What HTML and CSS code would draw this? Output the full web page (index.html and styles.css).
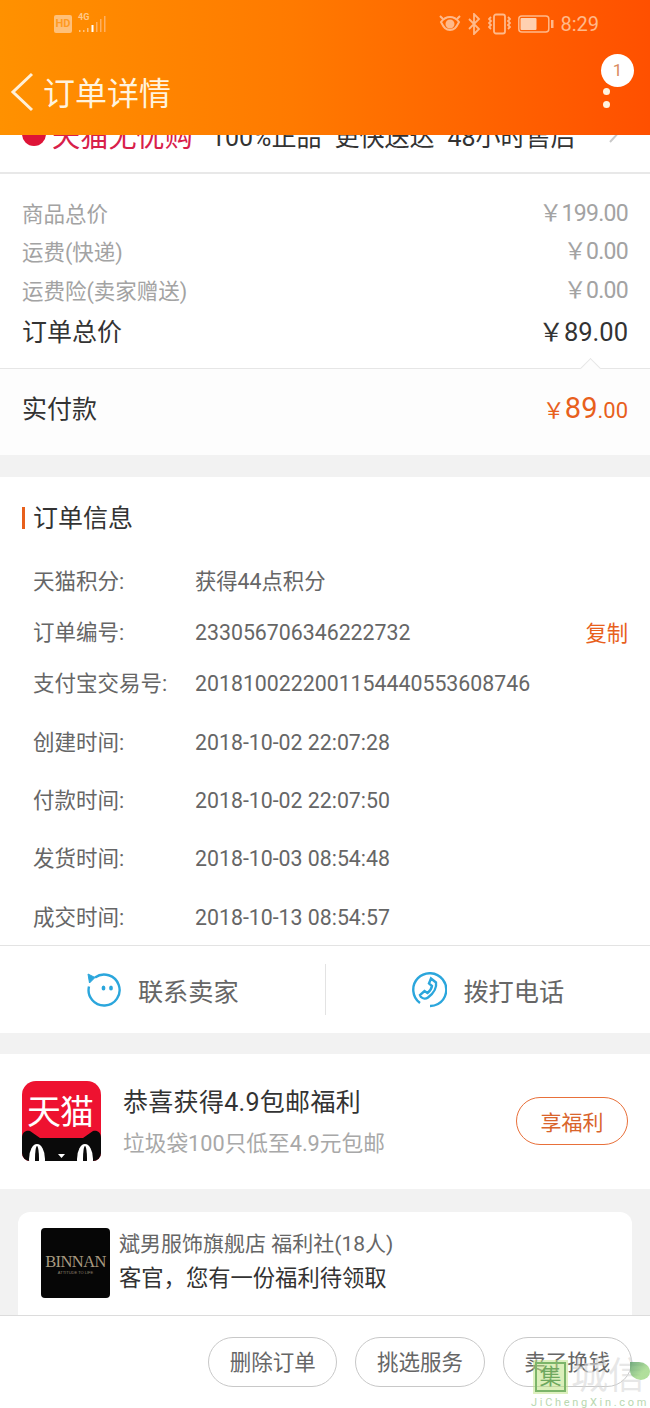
FILE: index.html
```html
<!DOCTYPE html>
<html lang="zh">
<head>
<meta charset="utf-8">
<title>订单详情</title>
<link rel="stylesheet" href="styles.css">
</head>
<body>
<div class="page">
  <header class="header">
    <div class="status">
      <div class="status-left">
        <span class="hd">HD</span>
        <div class="net">
          <span class="net-label">4G</span>
          <svg class="bars" width="32" height="20" viewBox="0 0 32 20"><g fill="#ffc27f"><rect x="3" y="15" width="1.500" height="2"/><rect x="7" y="15" width="1.500" height="2"/><rect x="11" y="13" width="1.500" height="4"/></g><rect x="15.500" y="10" width="2" height="7" fill="#fff"/><g fill="#ffb060"><rect x="20" y="7" width="1.500" height="10"/><rect x="24" y="4" width="1.500" height="13"/><rect x="28" y="1" width="1.500" height="16"/></g></svg>
        </div>
      </div>
      <div class="status-right">
        <svg width="22" height="20" viewBox="0 0 22 20" fill="none" stroke="#ffb98a" stroke-width="2"><path d="M2 8c3-4 5-5 9-5s6 1 9 5c-3 6-5 8-9 8s-6-2-9-8z"/><circle cx="11" cy="10" r="3.500" fill="#ffb98a"/><path d="M1 2l3 3M21 2l-3 3"/></svg>
        <svg width="13" height="22" viewBox="0 0 13 22" fill="none" stroke="#ffb98a" stroke-width="1.800"><path d="M1 6l10 10-5 5V1l5 5L1 16"/></svg>
        <svg width="23" height="22" viewBox="0 0 23 22" fill="none" stroke="#ffb98a" stroke-width="1.800"><rect x="6" y="1.500" width="11" height="19" rx="2"/><path d="M3 4l-2 2 2 2-2 2 2 2-2 2 2 2M20 4l2 2-2 2 2 2-2 2 2 2-2 2"/></svg>
        <svg width="36" height="18" viewBox="0 0 36 18"><rect x=".8" y="1" width="30" height="16" rx="3" fill="none" stroke="#ffb98a" stroke-width="1.500"/><rect x="2.500" y="3" width="16" height="12" rx="1" fill="#ffd0b0"/><rect x="33" y="5" width="2.500" height="8" fill="#ffb98a"/></svg>
        <span class="clock">8:29</span>
      </div>
    </div>
    <div class="nav">
      <svg class="back" width="24" height="40" viewBox="0 0 24 40" fill="none" stroke="#fff0d8" stroke-width="3"><path d="M22 2L3 20l19 18"/></svg>
      <h1 class="nav-title">订单详情</h1>
      <div class="more">
        <span class="badge">1</span>
        <span class="dot"></span>
        <span class="dot"></span>
      </div>
    </div>
  </header>

  <div class="assure">
    <div class="assure-inner">
      <span class="assure-mark"></span>
      <span class="assure-brand">天猫无忧购</span>
      <span class="assure-item assure-first">100%正品</span>
      <span class="assure-item">更快送达</span>
      <span class="assure-item">48小时售后</span>
      <svg class="assure-arrow" width="15" height="26" viewBox="0 0 15 26" fill="none" stroke="#c9c9c9" stroke-width="2"><path d="M2 1l11 12L2 25"/></svg>
    </div>
  </div>

  <section class="prices">
    <div class="price-row price-muted"><span>商品总价</span><span class="amount">￥199.00</span></div>
    <div class="price-row price-muted"><span>运费(快递)</span><span class="amount">￥0.00</span></div>
    <div class="price-row price-muted"><span>运费险(卖家赠送)</span><span class="amount">￥0.00</span></div>
    <div class="price-row price-total"><span>订单总价</span><span class="amount">￥89.00</span></div>
  </section>

  <section class="paid">
    <span class="caret"></span>
    <span class="paid-label">实付款</span>
    <span class="paid-amount"><span class="paid-small">￥</span><span class="paid-big">89</span><span class="paid-small">.00</span></span>
  </section>

  <section class="info">
    <h2 class="info-title">订单信息</h2>
    <dl class="info-list">
      <div class="info-row r1"><dt>天猫积分:</dt><dd class="cjk">获得44点积分</dd></div>
      <div class="info-row r1"><dt>订单编号:</dt><dd>233056706346222732</dd><a class="copy">复制</a></div>
      <div class="info-row r1 r-last"><dt>支付宝交易号:</dt><dd>2018100222001154440553608746</dd></div>
      <div class="info-row r2"><dt>创建时间:</dt><dd>2018-10-02 22:07:28</dd></div>
      <div class="info-row r2"><dt>付款时间:</dt><dd>2018-10-02 22:07:50</dd></div>
      <div class="info-row r2"><dt>发货时间:</dt><dd>2018-10-03 08:54:48</dd></div>
      <div class="info-row r2"><dt>成交时间:</dt><dd>2018-10-13 08:54:57</dd></div>
    </dl>
    <div class="contact">
      <div class="contact-item">
        <svg width="36" height="36" viewBox="0 0 36 36" fill="none" stroke="#2ba6dc" stroke-width="2.400"><path d="M9 5.500A15.500 15.500 0 1 1 3 14.500" /><path d="M2 2l1.500 9L9 5.500z" fill="#2ba6dc" stroke-width="1"/><ellipse cx="17.500" cy="16" rx="1.900" ry="2.600" fill="#2ba6dc" stroke="none"/><ellipse cx="25" cy="16" rx="1.900" ry="2.600" fill="#2ba6dc" stroke="none"/></svg>
        <span>联系卖家</span>
      </div>
      <div class="contact-item contact-right">
        <svg width="36" height="36" viewBox="0 0 36 36" fill="none" stroke="#2ba6dc" stroke-width="2.400"><path d="M9 31A16.500 16.500 0 1 1 27 32a16 16 0 0 1-8 2"/><path d="M20 6.500l5 4c.8 4-1.500 10-8 15-2 1.500-5 1.500-7-.5l-1-2 4.500-4 3 2c2-1.500 4-4 4.500-7l-3-2.500z"/></svg>
        <span>拨打电话</span>
      </div>
    </div>
  </section>

  <section class="promo">
    <div class="tmall">
      <span class="tmall-word">天猫</span>
      <svg class="tmall-cat" width="79" height="31" viewBox="0 0 79 31"><path d="M0 31V8C0 2 4 0 8 1l10 7h43l10-7c4-1 8 1 8 7v23z" fill="#0a0a0a"/><ellipse cx="15" cy="29" rx="8" ry="15" fill="#fff"/><ellipse cx="63" cy="29" rx="8" ry="15" fill="#fff"/><ellipse cx="15" cy="29" rx="2" ry="13" fill="#0a0a0a"/><ellipse cx="63" cy="29" rx="2" ry="13" fill="#0a0a0a"/><path d="M36 24h7l-3.500 4z" fill="#fff"/></svg>
    </div>
    <div class="promo-text">
      <div class="promo-title">恭喜获得4.9包邮福利</div>
      <div class="promo-sub">垃圾袋100只低至4.9元包邮</div>
    </div>
    <button class="promo-btn">享福利</button>
  </section>

  <section class="club">
    <div class="club-card">
      <div class="binnan">
        <span class="binnan-name">BINNAN</span>
        <span class="binnan-tag">ATTITUDE TO LIFE</span>
      </div>
      <div class="club-text">
        <div class="club-title">斌男服饰旗舰店 福利社(18人)</div>
        <div class="club-msg">客官，您有一份福利待领取</div>
      </div>
    </div>
  </section>

  <footer class="actions">
    <button class="action">删除订单</button>
    <button class="action">挑选服务</button>
    <button class="action">卖了换钱</button>
  </footer>

  <div class="watermark">
    <div class="wm-top"><span class="wm-box">集</span><span class="wm-word">城信</span><span class="wm-leaf"></span></div>
    <div class="wm-url">JiChengXin.com</div>
  </div>
</div>
</body>
</html>
```
FILE: styles.css
```css
* { box-sizing: border-box; }
html, body { margin: 0; padding: 0; }
body {
  font-family: Roboto, "Noto Sans CJK SC", sans-serif;
  background: #f2f2f2;
  color: #333;
}
.page {
  position: relative;
  width: 650px;
  height: 1408px;
  overflow: hidden;
  display: flex;
  flex-direction: column;
}
h1, h2, dl, dd, dt { margin: 0; padding: 0; font-weight: 400; }
button { font-family: inherit; background: none; padding: 0; }

/* header */
.header {
  position: relative;
  z-index: 2;
  flex: none;
  height: 135px;
  background: linear-gradient(90deg, #ff9100 0%, #ff7a00 45%, #ff5000 100%);
}
.status {
  height: 50px;
  display: flex;
  justify-content: space-between;
  align-items: center;
  padding: 0 51px 2px 54px;
}
.status-left { display: flex; align-items: center; gap: 4px; }
.hd {
  width: 18px;
  height: 18px;
  border-radius: 2px;
  background: #ffc078;
  color: #ff9a20;
  font: 700 11px/18px "Roboto", sans-serif;
  text-align: center;
}
.net { position: relative; width: 32px; height: 20px; }
.net-label {
  position: absolute;
  left: 2px;
  top: -2px;
  font: 700 9px/10px Roboto, sans-serif;
  color: #ffc98a;
}
.bars { position: absolute; left: 0; top: 1px; }
.status-right { display: flex; align-items: center; gap: 7px; }
.clock { font: 400 20px/24px Roboto, sans-serif; color: #ffb98a; margin-left: -1px; }
.nav {
  position: relative;
  display: flex;
  align-items: center;
  height: 85px;
  padding: 0 0 0 10px;
}
.back { flex: none; margin-top: -1px; }
.nav-title {
  margin-left: 9px;
  font-size: 32px;
  line-height: 44px;
  color: #fff3de;
  margin-top: 3px;
}
.more {
  position: absolute;
  left: 601px;
  top: 4px;
  width: 33px;
  height: 62px;
}
.badge {
  display: block;
  width: 33px;
  height: 33px;
  border-radius: 50%;
  background: #fff;
  color: #d98a60;
  font-size: 17px;
  line-height: 33px;
  text-align: center;
}
.dot {
  position: absolute;
  left: 2px;
  width: 7px;
  height: 7px;
  border-radius: 50%;
  background: #fff3e0;
}
.dot:nth-of-type(2) { top: 34px; }
.dot:nth-of-type(3) { top: 47px; }

/* assurance strip, cut off by the header */
.assure {
  flex: none;
  height: 39px;
  overflow: hidden;
  background: #fff;
  border-bottom: 2px solid #e8e8e8;
}
.assure-inner {
  display: flex;
  align-items: center;
  height: 40px;
  margin-top: -17px;
  padding-left: 22px;
}
.assure-mark {
  flex: none;
  width: 24px;
  height: 24px;
  margin-top: -8px;
  border-radius: 50%;
  background: #de1437;
}
.assure-brand {
  margin-left: 6px;
  font-size: 28.200px;
  color: #d8204a;
  line-height: 40px;
}
.assure-item { font-size: 25px; line-height: 40px; color: #333; margin-left: 13px; }
.assure-first { margin-left: 18px; }
.assure-arrow { margin: -16px 0 0 32px; }

/* price summary */
.prices {
  flex: none;
  height: 194px;
  padding: 19px 22px 0;
  background: #fff;
}
.price-row {
  display: flex;
  justify-content: space-between;
  align-items: center;
}
.price-muted { height: 38.500px; font-size: 21.500px; color: #a3a3a3; }
.price-muted .amount { font-size: 23px; margin-top: -3px; letter-spacing: -.7px; }
.price-total { height: 42px; font-size: 25px; color: #333; }
.price-total .amount { margin-top: -1px; font-size: 25.500px; }

.paid {
  position: relative;
  flex: none;
  height: 87px;
  display: flex;
  justify-content: space-between;
  align-items: center;
  padding: 0 22px;
  background: #fdfdfd;
  border-top: 1px solid #e6e6e6;
  margin-bottom: 22px;
}
.caret {
  position: absolute;
  left: 583px;
  top: -8px;
  width: 15px;
  height: 15px;
  background: #fdfdfd;
  border-top: 1px solid #e6e6e6;
  border-left: 1px solid #e6e6e6;
  transform: rotate(45deg);
}
.paid-label { font-size: 25px; color: #333; margin-top: -10px; }
.paid-amount { color: #e8601c; margin-top: -8px; }
.paid-small { font-size: 22px; }
.paid-big { font-size: 29px; }

/* order info */
.info {
  flex: none;
  height: 556px;
  background: #fff;
  display: flex;
  flex-direction: column;
}
.info-title {
  margin: 30px 0 0 22px;
  padding-left: 8px;
  border-left: 3px solid #e8601c;
  height: 22px;
  font-size: 25px;
  line-height: 24px;
  color: #333;
}
.info-list { padding: 27px 22px 0 33px; flex: none; height: 416px; }
.info-row {
  display: flex;
  align-items: center;
  font-size: 21.300px;
  color: #666;
}
.r1 { height: 51px; }
.r-last { margin-bottom: 4px; }
.r2 { height: 58.300px; }
.info-row dt { width: 162px; flex: none; font-size: 21.500px; margin-top: -4px; }
.info-row dd { flex: 1; }
.info-row .cjk { margin-top: -4px; }
.copy { color: #e8601c; font-size: 21.300px; margin-top: -2px; }
.contact {
  flex: 1;
  display: flex;
  border-top: 1px solid #e3e3e3;
  align-items: center;
}
.contact-item {
  flex: 1;
  height: 51px;
  display: flex;
  align-items: center;
  justify-content: center;
  gap: 16px;
  font-size: 25.200px;
  color: #666;
}
.contact-right { border-left: 1px solid #e3e3e3; }

/* promo */
.promo {
  flex: none;
  height: 135px;
  margin-top: 21px;
  background: #fff;
  display: flex;
  align-items: center;
  padding: 0 22px;
}
.tmall {
  position: relative;
  flex: none;
  width: 79px;
  height: 80px;
  background: #ee1230;
  border-radius: 14px 14px 8px 8px;
  overflow: hidden;
  margin-top: -2px;
}
.tmall-word {
  position: absolute;
  left: 5px;
  top: 7px;
  font-size: 34px;
  line-height: 48px;
  color: #fff;
  white-space: nowrap;
  letter-spacing: -1px;
}
.tmall-cat { position: absolute; left: 0; bottom: 0; }
.promo-text { flex: 1; margin-left: 22px; }
.promo-title { font-size: 25px; line-height: 32px; color: #333; letter-spacing: .3px; margin-top: 2px; }
.promo-sub { font-size: 21.700px; line-height: 28px; color: #a8a8a8; margin-top: 11px; }
.promo-btn {
  flex: none;
  width: 112px;
  height: 48px;
  border: 1px solid #e8703a;
  border-radius: 24px;
  color: #d9652c;
  font-size: 21px;
  margin-top: -2px;
}

/* club */
.club {
  flex: 1;
  padding: 23px 18px 0;
  overflow: hidden;
}
.club-card {
  display: flex;
  gap: 9px;
  height: 120px;
  padding: 16px 23px;
  background: #fff;
  border-radius: 12px 12px 0 0;
}
.binnan {
  flex: none;
  width: 69px;
  height: 70px;
  border-radius: 4px;
  background: #060606;
  display: flex;
  flex-direction: column;
  align-items: center;
  justify-content: center;
  overflow: hidden;
}
.binnan-name {
  font: 400 16.500px/16px "Liberation Serif", serif;
  color: #a89a80;
  white-space: nowrap;
  letter-spacing: -.6px;
  padding-top: 4px;
}
.binnan-tag {
  font: 400 4px/6px "Liberation Sans", sans-serif;
  color: #8d8270;
  white-space: nowrap;
}
.club-text { min-width: 0; }
.club-title { font-size: 21px; line-height: 32px; color: #666; }
.club-msg { font-size: 22.300px; line-height: 34px; color: #333; margin-top: 1px; }

/* bottom actions */
.actions {
  position: absolute;
  left: 0;
  right: 0;
  bottom: 0;
  height: 93px;
  background: #fff;
  border-top: 1px solid #dcdcdc;
  display: flex;
  justify-content: flex-end;
  gap: 18px;
  padding: 21px 18px 0 0;
}
.action {
  width: 129.300px;
  height: 50px;
  border: 1px solid #c8c8c8;
  border-radius: 25px;
  color: #666;
  font-size: 21.500px;
  padding-bottom: 4px;
}

/* watermark */
.watermark {
  position: absolute;
  left: 531px;
  top: 1361px;
  width: 119px;
  pointer-events: none;
}
.wm-top { display: flex; align-items: center; height: 32px; padding-left: 4px; }
.wm-box {
  flex: none;
  width: 31px;
  height: 30px;
  border: 2px solid #7cb56a;
  background: rgba(190, 225, 130, .55);
  outline: 2px solid rgba(190, 225, 130, .5);
  color: #6ea85e;
  font-size: 22px;
  line-height: 26px;
  text-align: center;
}
.wm-word {
  margin-left: 5px;
  font-size: 37px;
  line-height: 32px;
  color: rgba(215, 215, 215, .6);
  white-space: nowrap;
}
.wm-leaf {
  position: absolute;
  left: 99px;
  top: 1px;
  width: 20px;
  height: 18px;
  border-radius: 0 60% 50% 60%;
  background: linear-gradient(135deg, #5f9f6e 0%, #a3d98a 60%);
  opacity: .85;
}
.wm-url {
  margin-top: 3px;
  font: 400 11px/13px Roboto, sans-serif;
  letter-spacing: 2.700px;
  color: #b9d8b0;
  white-space: nowrap;
}
```
